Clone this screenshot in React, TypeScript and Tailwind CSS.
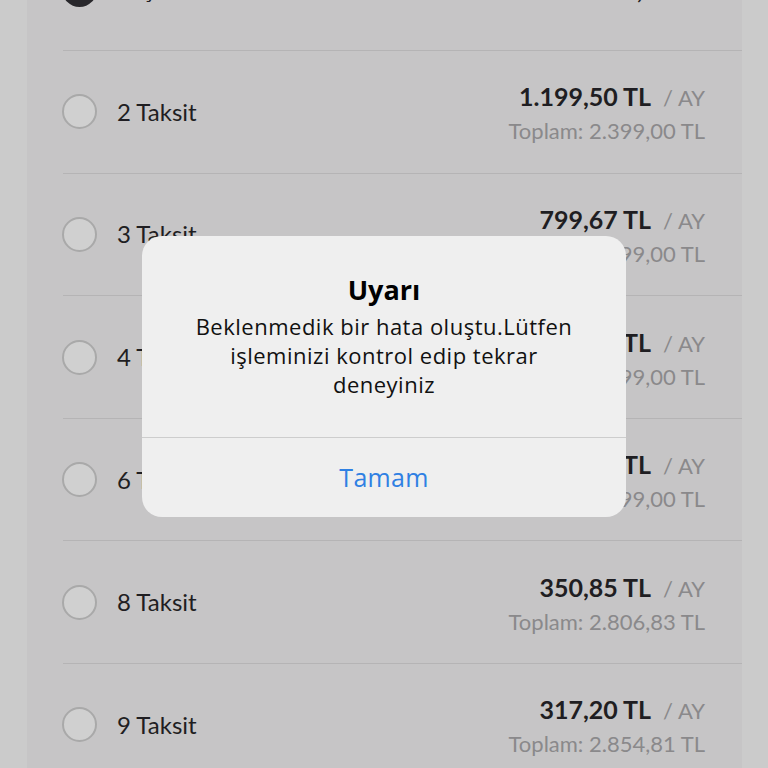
import React from 'react';

interface Plan {
    label: string;
    monthly: string;
    total?: string;
    selected?: boolean;
}

const plans: Plan[] = [
    { label: 'Peşin', monthly: '2.399,00 TL', selected: true },
    { label: '2 Taksit', monthly: '1.199,50 TL', total: '2.399,00 TL' },
    { label: '3 Taksit', monthly: '799,67 TL', total: '2.399,00 TL' },
    { label: '4 Taksit', monthly: '599,75 TL', total: '2.399,00 TL' },
    { label: '6 Taksit', monthly: '399,83 TL', total: '2.399,00 TL' },
    { label: '8 Taksit', monthly: '350,85 TL', total: '2.806,83 TL' },
    { label: '9 Taksit', monthly: '317,20 TL', total: '2.854,81 TL' },
];

const PlanRow: React.FC<{ plan: Plan }> = ({ plan }) => (
    <div className="h-[122.6px] shrink-0 ml-[36px] border-b border-[#b5b4b5] flex items-center">
        {plan.selected ? (
            <span className="w-[35px] h-[35px] rounded-full bg-[#28272b] shrink-0 -ml-px" />
        ) : (
            <span className="w-[35px] h-[35px] rounded-full bg-[#d0d0d0] border-2 border-[#a9a9a9] shrink-0 -ml-px" />
        )}
        <span className="ml-[20px] text-[24px] text-[#1f1e22]">{plan.label}</span>
        <div className="ml-auto pr-[37px] mt-[3px] flex flex-col items-end">
            <div className="leading-[32px] whitespace-nowrap">
                <span className="text-[25px] font-bold text-[#1f1e22]">{plan.monthly}</span>
                {plan.total && <span className="text-[22px] text-[#8a898b] ml-[12px]">/ AY</span>}
            </div>
            {plan.total && (
                <div className="leading-[30px] text-[22px] text-[#8a898b] whitespace-nowrap">Toplam: {plan.total}</div>
            )}
        </div>
    </div>
);

export default function App() {
    return (
        <div className="w-[768px] h-[768px] relative overflow-hidden bg-[#cbcbcb] font-['Lato',sans-serif]">
            {/* Installment list (dimmed) */}
            <div className="mx-[27px] w-[715px] h-[900px] bg-[#c6c5c6] flex flex-col -mt-[71.5px]">
                {plans.map((p) => (
                    <PlanRow key={p.label} plan={p} />
                ))}
            </div>

            {/* Alert */}
            <div className="absolute left-[142px] top-[236px] w-[484px] h-[281px] bg-[#efefef] rounded-[20px] flex flex-col font-['Open_Sans',sans-serif]">
                <div className="flex-1 flex flex-col items-center pt-[37px] px-[30px] text-center">
                    <h2 className="text-[27px] font-bold text-black leading-[34px]">Uyarı</h2>
                    <p className="mt-[5px] text-[22px] tracking-[0.5px] leading-[29px] text-[#111]">
                        Beklenmedik bir hata oluştu.Lütfen
                        <br />
                        işleminizi kontrol edip tekrar
                        <br />
                        deneyiniz
                    </p>
                </div>
                <div className="h-[80px] border-t border-[#cdcdcd] flex items-center justify-center">
                    <button className="text-[25px] tracking-[0.3px] text-[#2f80e3]">Tamam</button>
                </div>
            </div>
        </div>
    );
}
